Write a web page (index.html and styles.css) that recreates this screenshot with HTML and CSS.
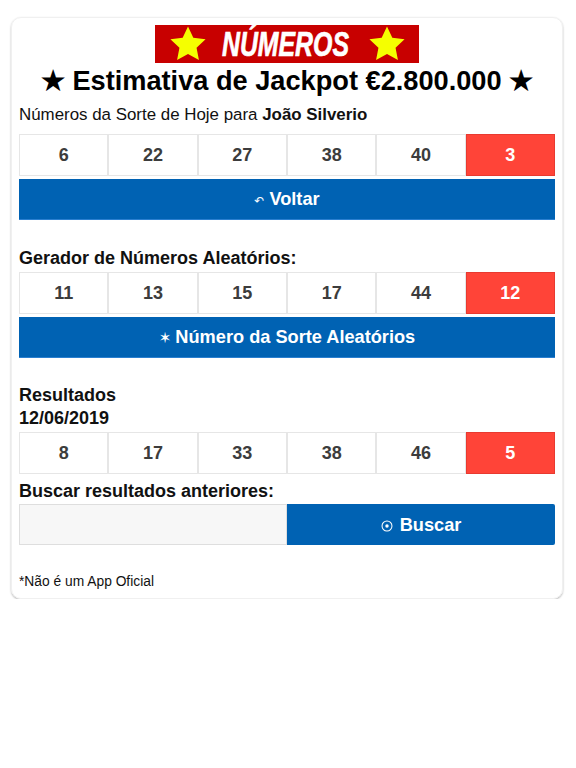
FILE: index.html
```html
<!DOCTYPE html>
<html lang="pt">
<head>
    <meta charset="UTF-8">
    <meta name="viewport" content="width=device-width, initial-scale=1.0">
    <title>Números</title>
    <link rel="stylesheet" href="styles.css">
</head>
<body>
    <div class="card">
        <div class="logo">
            <svg class="logo-star" viewBox="0 0 40 40"><polygon points="20,1.5 25.6,13.3 38.5,15 29,23.9 31.5,36.8 20,30.5 8.5,36.8 11,23.9 1.5,15 14.4,13.3"/></svg>
            <span class="logo-text"><span class="logo-word">NÚMEROS</span></span>
            <svg class="logo-star" viewBox="0 0 40 40"><polygon points="20,1.5 25.6,13.3 38.5,15 29,23.9 31.5,36.8 20,30.5 8.5,36.8 11,23.9 1.5,15 14.4,13.3"/></svg>
        </div>
        <div class="jackpot">★ Estimativa de Jackpot €2.800.000 ★</div>
        <div class="subtitle">Números da Sorte de Hoje para <b>João Silverio</b></div>
        <div class="numbers">
            <div class="num">6</div>
            <div class="num">22</div>
            <div class="num">27</div>
            <div class="num">38</div>
            <div class="num">40</div>
            <div class="num red">3</div>
        </div>
        <div class="btn"><span class="btn-icon">↶</span> Voltar</div>

        <div class="label gen-label">Gerador de Números Aleatórios:</div>
        <div class="numbers">
            <div class="num">11</div>
            <div class="num">13</div>
            <div class="num">15</div>
            <div class="num">17</div>
            <div class="num">44</div>
            <div class="num red">12</div>
        </div>
        <div class="btn"><span class="btn-icon btn-star">✶</span> Número da Sorte Aleatórios</div>

        <div class="label res-label">Resultados<br>12/06/2019</div>
        <div class="numbers">
            <div class="num">8</div>
            <div class="num">17</div>
            <div class="num">33</div>
            <div class="num">38</div>
            <div class="num">46</div>
            <div class="num red">5</div>
        </div>
        <div class="label search-label">Buscar resultados anteriores:</div>
        <div class="search">
            <input class="search-input" type="text">
            <div class="btn search-btn">
                <svg class="search-icon" viewBox="0 0 14 14"><circle cx="7" cy="7" r="5.8"/><circle class="dot" cx="7" cy="7" r="2"/></svg>
                Buscar
            </div>
        </div>
        <div class="note">*Não é um App Oficial</div>
    </div>
</body>
</html>
```

FILE: styles.css
```css
* {
    box-sizing: border-box;
}
body {
    margin: 0;
    background-color: #fff;
    font-family: "Liberation Sans", Arial, sans-serif;
    color: #111;
}
.card {
    margin: 17px 13px 0 11px;
    height: 582px;
    padding: 7px 7px 0 7px;
    border: 1px solid #f0f0f0;
    border-radius: 10px;
    box-shadow: 0 1px 2px rgba(0, 0, 0, 0.3);
}
.logo {
    width: 264px;
    height: 38px;
    margin: 0 auto;
    background-color: #c80000;
    display: flex;
    justify-content: center;
    align-items: center;
    gap: 17px;
}
.logo-star {
    width: 38px;
    height: 38px;
}
.logo-star polygon {
    fill: #f5ff00;
}
.logo-text {
    width: 127px;
    display: flex;
    justify-content: center;
}
.logo-word {
    flex-shrink: 0;
    color: #fff;
    font-size: 35px;
    font-weight: bold;
    font-style: italic;
    line-height: 38px;
    white-space: nowrap;
    -webkit-text-stroke: 0.7px #fff;
    transform: translateX(-2px) scaleX(0.71);
}
.jackpot {
    height: 36px;
    font-size: 27.2px;
    font-weight: bold;
    line-height: 36px;
    text-align: center;
    white-space: nowrap;
    color: #000;
}
.subtitle {
    margin-top: 2px;
    height: 33px;
    font-size: 16.9px;
    line-height: 27px;
}
.label {
    font-size: 18px;
    font-weight: bold;
    line-height: 23px;
}
.gen-label {
    margin-top: 27px;
    margin-bottom: 2px;
}
.res-label {
    margin-top: 26px;
    margin-bottom: 2px;
}
.search-label {
    margin-top: 6px;
}
.numbers {
    display: grid;
    grid-template-columns: repeat(6, 1fr);
    height: 42px;
}
.num {
    display: flex;
    justify-content: center;
    align-items: center;
    border: 1px solid #e6e6e6;
    color: #3c3c3c;
    font-size: 18px;
    font-weight: bold;
}
.num.red {
    background-color: #ff4438;
    border-color: #e83a30;
    color: #fff;
}
.btn {
    margin-top: 3px;
    height: 41px;
    background-color: #0062b3;
    border-bottom: 1px solid #2a7fd0;
    color: #fff;
    font-size: 18.2px;
    font-weight: bold;
    display: flex;
    justify-content: center;
    align-items: center;
    gap: 5px;
}
.btn-icon {
    font-family: "DejaVu Sans", sans-serif;
    font-size: 12px;
    font-weight: normal;
    line-height: 1;
    margin-top: 3px;
}
.btn-star {
    font-size: 15px;
    margin-top: 2px;
    margin-right: -1px;
}
.search {
    display: flex;
    height: 41px;
    margin-top: 1px;
}
.search-input {
    width: 268px;
    height: 41px;
    background-color: #f7f7f7;
    border: 1px solid #dedede;
    border-radius: 0;
}
.search-btn {
    flex: 1;
    margin-top: 0;
    padding-top: 1px;
    border-bottom: 0;
    border-radius: 0 2px 2px 0;
    gap: 6px;
}
.search-icon {
    width: 12px;
    height: 12px;
    margin-right: 1px;
    margin-top: 1px;
}
.search-icon circle {
    fill: none;
    stroke: #fff;
    stroke-width: 1.2;
}
.search-icon .dot {
    fill: #fff;
    stroke: none;
}
.note {
    margin-top: 28px;
    font-size: 13.8px;
    line-height: 18px;
}
```
